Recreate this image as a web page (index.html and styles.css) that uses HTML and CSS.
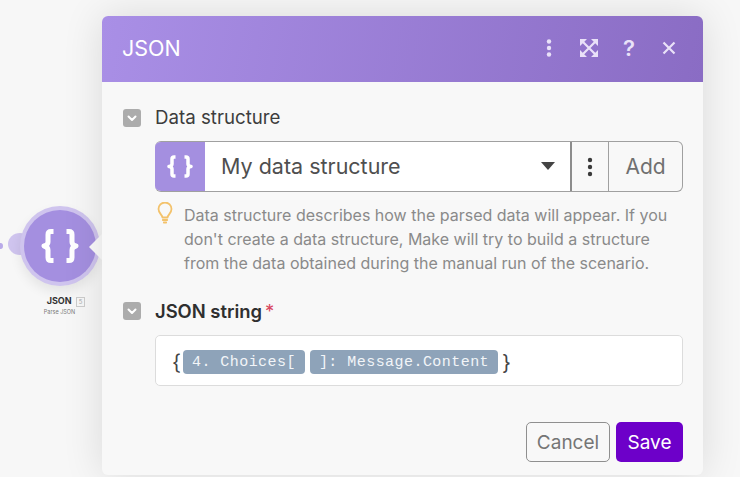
FILE: index.html
```html
<!DOCTYPE html>
<html lang="en">
<head>
    <meta charset="UTF-8">
    <title>JSON - Parse JSON</title>
    <link rel="stylesheet" href="styles.css">
</head>
<body>
    <div class="canvas">
        <div class="node">
            <span class="node-dot"></span>
            <span class="node-stub"></span>
            <div class="node-ring">
                <div class="node-circle">
                    <svg class="node-icon" viewBox="0 0 38 34" width="38" height="34">
                        <path d="M12.500 2.500H10Q7 2.500 7 5.500V13Q7 16 3 17Q7 18 7 21V28.500Q7 31.500 10 31.500H12.500M25.500 2.500H28Q31 2.500 31 5.500V13Q31 16 35 17Q31 18 31 21V28.500Q31 31.500 28 31.500H25.500"/>
                    </svg>
                </div>
            </div>
            <span class="node-notch"></span>
            <div class="node-title">JSON <span class="node-badge">5</span></div>
            <div class="node-sub">Parse JSON</div>
        </div>

        <div class="panel">
            <header class="panel-head">
                <h1>JSON</h1>
                <div class="head-icons">
                    <svg viewBox="0 0 20 20" width="20" height="20"><circle cx="10" cy="3.500" r="2.200"/><circle cx="10" cy="10" r="2.200"/><circle cx="10" cy="16.500" r="2.200"/></svg>
                    <svg viewBox="0 0 20 20" width="20" height="20"><path class="line" d="M4 4L16 16M16 4L4 16"/><path d="M1 1H8L1 8ZM19 1H12L19 8ZM1 19H8L1 12ZM19 19H12L19 12Z"/></svg>
                    <span class="head-help">?</span>
                    <svg viewBox="0 0 20 20" width="20" height="20"><path class="line" d="M4.500 4.500L15.500 15.500M15.500 4.500L4.500 15.500"/></svg>
                </div>
            </header>

            <div class="panel-body">
                <section class="field">
                    <div class="field-label">
                        <span class="toggle"><svg viewBox="0 0 18 18" width="18" height="18"><path d="M5.500 7.500L9 11L12.500 7.500"/></svg></span>
                        <span>Data structure</span>
                    </div>
                    <div class="select-row">
                        <div class="select-icon">
                            <svg viewBox="0 0 26 23" width="26" height="23"><path d="M8.500 2H7Q5 2 5 4V9Q5 11 2 11.500Q5 12 5 14V19Q5 21 7 21H8.500M17.500 2H19Q21 2 21 4V9Q21 11 24 11.500Q21 12 21 14V19Q21 21 19 21H17.500"/></svg>
                        </div>
                        <div class="select-value">
                            <span>My data structure</span>
                            <span class="caret"></span>
                        </div>
                        <div class="select-more">
                            <svg viewBox="0 0 6 20" width="6" height="20"><circle cx="3" cy="3" r="2.200"/><circle cx="3" cy="10" r="2.200"/><circle cx="3" cy="17" r="2.200"/></svg>
                        </div>
                        <div class="select-add">Add</div>
                    </div>
                    <div class="hint">
                        <svg class="bulb" viewBox="0 0 16 22" width="16" height="22"><path d="M5.500 15.500C5 12.500 1.500 11 1.500 7A6.500 6.500 0 0 1 14.500 7C14.500 11 11 12.500 10.500 15.500ZM5.800 18H10.200M6.800 20.500H9.200"/></svg>
                        <p>Data structure describes how the parsed data will appear. If you don't create a data structure, Make will try to build a structure from the data obtained during the manual run of the scenario.</p>
                    </div>
                </section>

                <section class="field">
                    <div class="field-label strong">
                        <span class="toggle"><svg viewBox="0 0 18 18" width="18" height="18"><path d="M5.500 7.500L9 11L12.500 7.500"/></svg></span>
                        <span>JSON string</span><span class="required">*</span>
                    </div>
                    <div class="json-input">
                        <span class="brace brace-open">{</span>
                        <span class="tag">4. Choices[</span>
                        <span class="tag">]: Message.Content</span>
                        <span class="brace brace-close">}</span>
                    </div>
                </section>
            </div>

            <footer class="panel-foot">
                <button class="btn-cancel">Cancel</button>
                <button class="btn-save">Save</button>
            </footer>
        </div>
    </div>
</body>
</html>
```

FILE: styles.css
```css
* {
    box-sizing: border-box;
}
html, body {
    margin: 0;
    padding: 0;
    height: 100%;
    overflow: hidden;
}
body {
    font-family: Inter, "Liberation Sans", sans-serif;
    background-color: #f7f7f7;
    color: #333;
}
.canvas {
    position: relative;
    width: 740px;
    height: 477px;
    overflow: hidden;
}

/* module on the scenario canvas */
.node {
    position: absolute;
    left: 0;
    top: 205px;
    width: 102px;
    height: 115px;
}
.node-dot {
    position: absolute;
    left: -2px;
    top: 38px;
    width: 5px;
    height: 6px;
    border-radius: 50%;
    background-color: #b9aae8;
}
.node-stub {
    position: absolute;
    left: 8px;
    top: 28px;
    width: 24px;
    height: 22px;
    border-radius: 50%;
    background-color: #cfc4ee;
}
.node-ring {
    position: absolute;
    left: 20px;
    top: 1px;
    width: 80px;
    height: 80px;
    border-radius: 50%;
    background-color: #cfc4ee;
    display: flex;
    align-items: center;
    justify-content: center;
    box-shadow: 0 6px 12px rgba(0, 0, 0, 0.08);
}
.node-circle {
    width: 72px;
    height: 72px;
    border-radius: 50%;
    background-color: #a48fe0;
    display: flex;
    align-items: center;
    justify-content: center;
}
.node-icon path {
    fill: none;
    stroke: #fff;
    stroke-width: 5;
    stroke-linecap: butt;
    stroke-linejoin: round;
}
.node-notch {
    position: absolute;
    left: 89px;
    top: 29px;
    width: 0;
    height: 0;
    border-top: 13px solid transparent;
    border-bottom: 13px solid transparent;
    border-right: 13px solid #fbfbfb;
}
.node-title {
    position: absolute;
    left: 0;
    top: 90px;
    width: 132px;
    text-align: center;
    font-size: 9px;
    font-weight: 700;
    line-height: 12px;
    color: #333;
}
.node-badge {
    display: inline-block;
    border: 1px solid #ccc;
    color: #aaa;
    font-size: 6px;
    font-weight: 400;
    line-height: 8px;
    padding: 0 2px;
    margin-left: 2px;
}
.node-sub {
    position: absolute;
    left: 0;
    top: 102px;
    width: 119px;
    text-align: center;
    font-size: 5.500px;
    line-height: 10px;
    color: #777;
}

/* settings dialog */
.panel {
    position: absolute;
    left: 102px;
    top: 16px;
    width: 601px;
    height: 459px;
    background-color: #f8f8f8;
    border-radius: 6px;
    box-shadow: 0 0 40px rgba(0, 0, 0, 0.12);
    display: flex;
    flex-direction: column;
    overflow: hidden;
}
.panel-head {
    height: 66px;
    padding: 0 24px 2px 20px;
    background: linear-gradient(100deg, #a98fe6, #8a6cc4);
    color: #fff;
    display: flex;
    align-items: center;
    justify-content: space-between;
}
.panel-head h1 {
    margin: 0;
    font-size: 21.500px;
    font-weight: 400;
}
.head-icons {
    display: flex;
    align-items: center;
    gap: 20px;
}
.head-icons svg {
    fill: #e9e1f8;
}
.head-icons .line {
    fill: none;
    stroke: #e9e1f8;
    stroke-width: 2.200;
}
.head-help {
    width: 20px;
    text-align: center;
    font-size: 22px;
    font-weight: 600;
    line-height: 20px;
    color: #e9e1f8;
}
.panel-body {
    flex: 1;
    padding: 0 20px 0 21px;
}
.field-label {
    display: flex;
    align-items: center;
    gap: 14px;
    font-size: 18.700px;
    line-height: 24px;
    color: #3d3d3d;
}
.field-label.strong {
    font-size: 18.400px;
    font-weight: 600;
    color: #2f2f2f;
}
.required {
    color: #d9475f;
    font-weight: 400;
    margin-left: -11px;
}
.toggle {
    width: 18px;
    height: 18px;
    border-radius: 3px;
    background-color: #acacac;
    flex: none;
}
.toggle svg {
    display: block;
    fill: none;
    stroke: #fff;
    stroke-width: 2;
    stroke-linecap: round;
    stroke-linejoin: round;
}
.field:first-child {
    padding-top: 24px;
}
.select-row {
    display: flex;
    height: 51px;
    margin: 11px 0 0 32px;
    border: 1px solid #a0a0a0;
    border-left: none;
    border-radius: 6px;
    overflow: hidden;
}
.select-icon {
    width: 50px;
    margin: -1px 0;
    background-color: #a48fe0;
    display: flex;
    align-items: center;
    justify-content: center;
    flex: none;
}
.select-icon path {
    fill: none;
    stroke: #fff;
    stroke-width: 3.500;
    stroke-linecap: butt;
    stroke-linejoin: round;
}
.select-value {
    flex: 1;
    padding: 0 15px 2px 16px;
    background-color: #fff;
    display: flex;
    align-items: center;
    justify-content: space-between;
    font-size: 21.500px;
    color: #4f4f4f;
    border-right: 2px solid #8c8c8c;
}
.caret {
    width: 0;
    height: 0;
    border-left: 7px solid transparent;
    border-right: 7px solid transparent;
    border-top: 8px solid #444;
}
.select-more {
    width: 37px;
    display: flex;
    align-items: center;
    justify-content: center;
    border-right: 1px solid #a0a0a0;
    flex: none;
}
.select-more svg {
    fill: #3a3a3a;
}
.select-add {
    width: 73px;
    text-align: center;
    line-height: 49px;
    font-size: 21px;
    color: #707070;
    flex: none;
}
.hint {
    display: flex;
    gap: 11px;
    margin: 10px 0 0 34px;
}
.bulb {
    flex: none;
    fill: none;
    stroke: #f3c26b;
    stroke-width: 1.800;
    stroke-linecap: round;
    stroke-linejoin: round;
}
.hint p {
    margin: 1px 0 0;
    width: 490px;
    font-size: 16px;
    line-height: 24px;
    color: #8a8a8a;
}
.field + .field {
    margin-top: 24px;
}
.json-input {
    display: flex;
    align-items: center;
    gap: 5px;
    height: 51px;
    margin: 12px 0 0 32px;
    padding: 3px 16px 0;
    background-color: #fff;
    border: 1px solid #dcdcdc;
    border-radius: 5px;
}
.brace {
    font-size: 21px;
    color: #444;
}
.brace-open {
    margin-right: -3px;
}
.brace-close {
    margin-left: -1px;
}
.tag {
    height: 24px;
    padding: 0 9px;
    border-radius: 4px;
    background-color: #8ea3b9;
    color: #f2f5f8;
    font-family: "Liberation Mono", monospace;
    font-size: 15px;
    letter-spacing: 0.450px;
    line-height: 26px;
}
.panel-foot {
    display: flex;
    justify-content: flex-end;
    gap: 6px;
    padding: 0 20px 13px 0;
}
.panel-foot button {
    height: 40px;
    border-radius: 5px;
    font-family: inherit;
    font-size: 19px;
    cursor: pointer;
}
.btn-cancel {
    width: 84px;
    background-color: transparent;
    border: 1px solid #8f8f8f;
    color: #757575;
}
.btn-save {
    width: 67px;
    background-color: #6d00c9;
    border: none;
    color: #fff;
}
```
